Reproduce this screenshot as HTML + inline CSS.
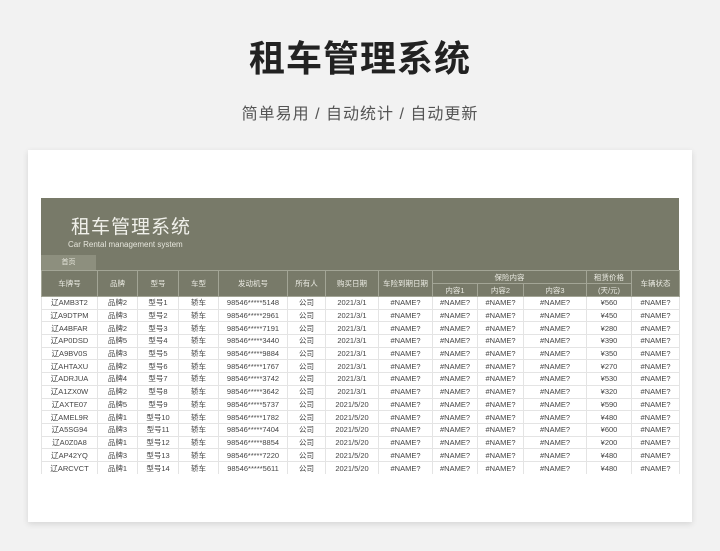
<!DOCTYPE html>
<html><head><meta charset="utf-8"><style>
*{margin:0;padding:0;box-sizing:border-box}
body{width:720px;height:551px;background:#f2f2f2;font-family:"Liberation Sans","Noto Sans CJK SC",sans-serif;position:relative;overflow:hidden}
.t1{position:absolute;top:30px;width:720px;text-align:center;font-size:36px;font-weight:bold;color:#222;letter-spacing:1px}
.t2{position:absolute;top:100px;width:720px;text-align:center;font-size:16px;color:#555;letter-spacing:1px}
.card{position:absolute;left:28px;top:150px;width:664px;height:372px;background:#fff;box-shadow:0 2px 6px rgba(0,0,0,.12)}
.ban{position:absolute;left:41px;top:198px;width:638px;height:72px;background:#787a69}
.ban .h{position:absolute;left:30px;top:14px;font-size:19px;color:#f0f0ea;letter-spacing:1px}
.ban .e{position:absolute;left:27px;top:42px;font-size:8px;color:#e6e6dc}
.ban .tab{position:absolute;left:0;top:57px;width:55px;height:15px;background:#8d8f7e;color:#e8e8de;font-size:7px;text-align:center;line-height:15px}
table{position:absolute;left:41px;top:270px;width:638px;border-collapse:collapse;table-layout:fixed}
td{font-size:7.5px;text-align:center;color:#444;border:1px solid #e4e4e4;height:12.7px;line-height:11px;white-space:nowrap;overflow:hidden}
thead td{background:#787a69;color:#ecece4;border:1px solid #a3a596;height:13px}
</style></head><body>
<div class="t1">租车管理系统</div>
<div class="t2">简单易用 / 自动统计 / 自动更新</div>
<div class="card"></div>
<div class="ban"><div class="h">租车管理系统</div><div class="e">Car Rental management system</div><div class="tab">首页</div></div>
<table>
<colgroup><col style="width:56px"><col style="width:40px"><col style="width:41px"><col style="width:40px"><col style="width:69px"><col style="width:38px"><col style="width:53px"><col style="width:54px"><col style="width:45px"><col style="width:46px"><col style="width:63px"><col style="width:45px"><col style="width:48px"></colgroup>
<thead>
<tr><td rowspan="2">车牌号</td><td rowspan="2">品牌</td><td rowspan="2">型号</td><td rowspan="2">车型</td><td rowspan="2">发动机号</td><td rowspan="2">所有人</td><td rowspan="2">购买日期</td><td rowspan="2">车险到期日期</td><td colspan="3">保险内容</td><td>租赁价格</td><td rowspan="2">车辆状态</td></tr>
<tr><td>内容1</td><td>内容2</td><td>内容3</td><td>(天/元)</td></tr>
</thead>
<tbody>
<tr><td>辽AMB3T2</td><td>品牌2</td><td>型号1</td><td>轿车</td><td>98546*****5148</td><td>公司</td><td>2021/3/1</td><td>#NAME?</td><td>#NAME?</td><td>#NAME?</td><td>#NAME?</td><td>¥560</td><td>#NAME?</td></tr>
<tr><td>辽A9DTPM</td><td>品牌3</td><td>型号2</td><td>轿车</td><td>98546*****2961</td><td>公司</td><td>2021/3/1</td><td>#NAME?</td><td>#NAME?</td><td>#NAME?</td><td>#NAME?</td><td>¥450</td><td>#NAME?</td></tr>
<tr><td>辽A4BFAR</td><td>品牌2</td><td>型号3</td><td>轿车</td><td>98546*****7191</td><td>公司</td><td>2021/3/1</td><td>#NAME?</td><td>#NAME?</td><td>#NAME?</td><td>#NAME?</td><td>¥280</td><td>#NAME?</td></tr>
<tr><td>辽AP0DSD</td><td>品牌5</td><td>型号4</td><td>轿车</td><td>98546*****3440</td><td>公司</td><td>2021/3/1</td><td>#NAME?</td><td>#NAME?</td><td>#NAME?</td><td>#NAME?</td><td>¥390</td><td>#NAME?</td></tr>
<tr><td>辽A9BV0S</td><td>品牌3</td><td>型号5</td><td>轿车</td><td>98546*****9884</td><td>公司</td><td>2021/3/1</td><td>#NAME?</td><td>#NAME?</td><td>#NAME?</td><td>#NAME?</td><td>¥350</td><td>#NAME?</td></tr>
<tr><td>辽AHTAXU</td><td>品牌2</td><td>型号6</td><td>轿车</td><td>98546*****1767</td><td>公司</td><td>2021/3/1</td><td>#NAME?</td><td>#NAME?</td><td>#NAME?</td><td>#NAME?</td><td>¥270</td><td>#NAME?</td></tr>
<tr><td>辽ADRJUA</td><td>品牌4</td><td>型号7</td><td>轿车</td><td>98546*****3742</td><td>公司</td><td>2021/3/1</td><td>#NAME?</td><td>#NAME?</td><td>#NAME?</td><td>#NAME?</td><td>¥530</td><td>#NAME?</td></tr>
<tr><td>辽A1ZX0W</td><td>品牌2</td><td>型号8</td><td>轿车</td><td>98546*****3642</td><td>公司</td><td>2021/3/1</td><td>#NAME?</td><td>#NAME?</td><td>#NAME?</td><td>#NAME?</td><td>¥320</td><td>#NAME?</td></tr>
<tr><td>辽AXTE07</td><td>品牌5</td><td>型号9</td><td>轿车</td><td>98546*****5737</td><td>公司</td><td>2021/5/20</td><td>#NAME?</td><td>#NAME?</td><td>#NAME?</td><td>#NAME?</td><td>¥590</td><td>#NAME?</td></tr>
<tr><td>辽AMEL9R</td><td>品牌1</td><td>型号10</td><td>轿车</td><td>98546*****1782</td><td>公司</td><td>2021/5/20</td><td>#NAME?</td><td>#NAME?</td><td>#NAME?</td><td>#NAME?</td><td>¥480</td><td>#NAME?</td></tr>
<tr><td>辽A5SG94</td><td>品牌3</td><td>型号11</td><td>轿车</td><td>98546*****7404</td><td>公司</td><td>2021/5/20</td><td>#NAME?</td><td>#NAME?</td><td>#NAME?</td><td>#NAME?</td><td>¥600</td><td>#NAME?</td></tr>
<tr><td>辽A0Z0A8</td><td>品牌1</td><td>型号12</td><td>轿车</td><td>98546*****8854</td><td>公司</td><td>2021/5/20</td><td>#NAME?</td><td>#NAME?</td><td>#NAME?</td><td>#NAME?</td><td>¥200</td><td>#NAME?</td></tr>
<tr><td>辽AP42YQ</td><td>品牌3</td><td>型号13</td><td>轿车</td><td>98546*****7220</td><td>公司</td><td>2021/5/20</td><td>#NAME?</td><td>#NAME?</td><td>#NAME?</td><td>#NAME?</td><td>¥480</td><td>#NAME?</td></tr>
<tr><td style="border-bottom:none">辽ARCVCT</td><td style="border-bottom:none">品牌1</td><td style="border-bottom:none">型号14</td><td style="border-bottom:none">轿车</td><td style="border-bottom:none">98546*****5611</td><td style="border-bottom:none">公司</td><td style="border-bottom:none">2021/5/20</td><td style="border-bottom:none">#NAME?</td><td style="border-bottom:none">#NAME?</td><td style="border-bottom:none">#NAME?</td><td style="border-bottom:none">#NAME?</td><td style="border-bottom:none">¥480</td><td style="border-bottom:none">#NAME?</td></tr>
</tbody>
</table>
</body></html>
